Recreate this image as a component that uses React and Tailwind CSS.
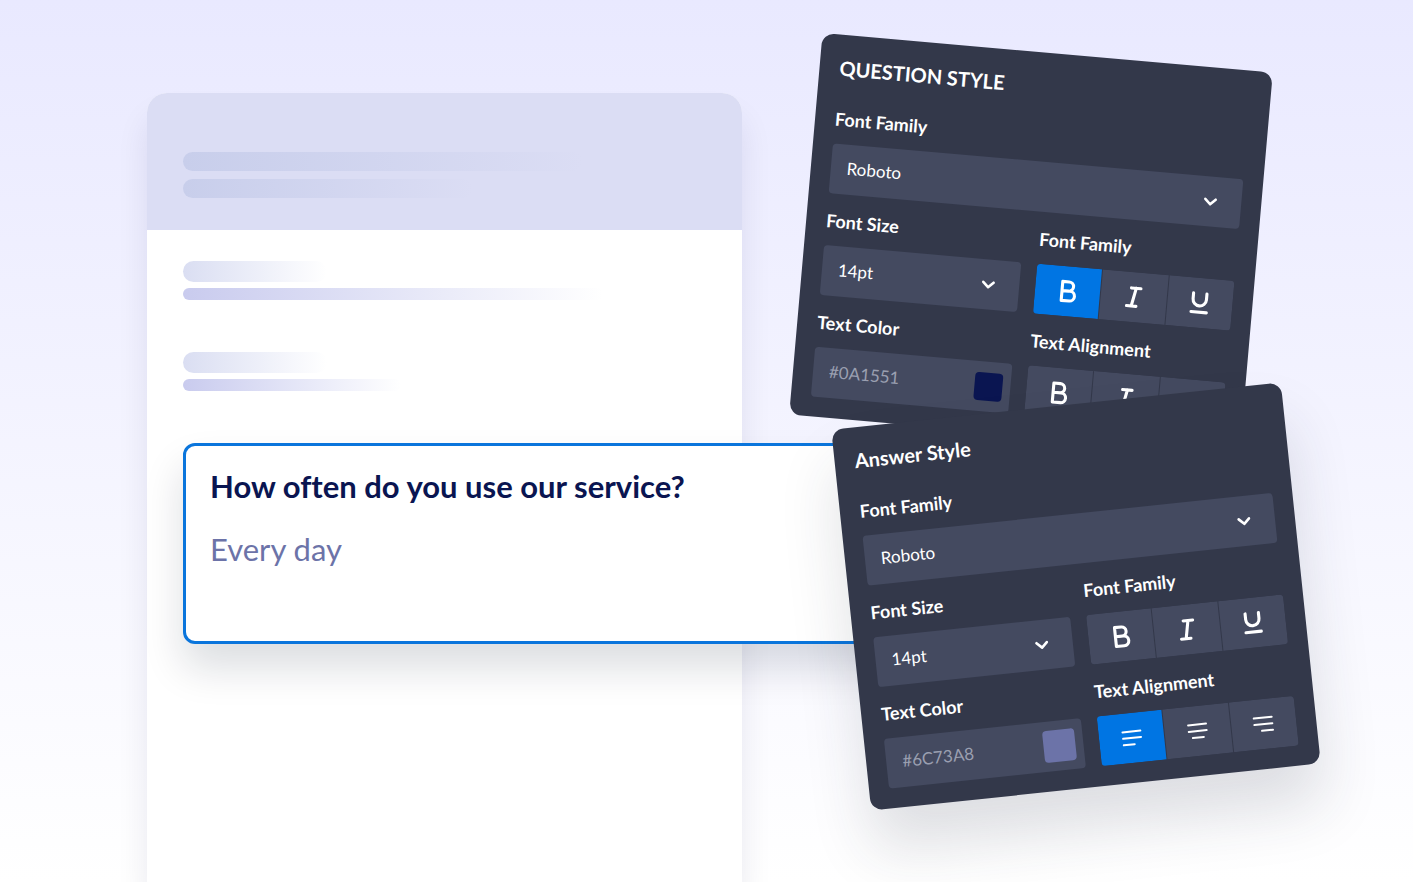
import React, { useId } from 'react'
import clsx from 'clsx'

function ChevronIcon() {
  return (
    <svg aria-hidden="true" viewBox="0 0 14 10" className="pointer-events-none absolute right-6 w-[14px] h-[10px]" fill="none" stroke="white" strokeWidth="2.6" strokeLinecap="round" strokeLinejoin="round">
      <path d="M1.8 2.8 7 7.8l5.2-5" />
    </svg>
  )
}

const ICON_PATHS = {
  bold: 'M6 2.5h6.6a4.6 4.6 0 0 1 0 9.2H6zM6 11.7h8a4.8 4.8 0 0 1 0 9.8H6z',
  italic: 'M9 3h9.5M5.5 21H15M13.8 3l-3.6 18',
  underline: 'M5.3 2.5v5.8a6.7 6.7 0 0 0 13.4 0V2.5M4.3 21.3h15.4',
  left: 'M3 5.5h18M3 12h18M3 18.5h11',
  center: 'M3 5.5h18M3 12h18M6.5 18.5h11',
  right: 'M3 5.5h18M3 12h18M10 18.5h11',
}

const THIN_ICONS = ['left', 'center', 'right']

function ToolIcon({ name }) {
  return (
    <svg aria-hidden="true" viewBox="0 0 24 24" className="w-6 h-6" fill="none" stroke="white" strokeWidth={THIN_ICONS.includes(name) ? 2 : 3.1} strokeLinecap="round" strokeLinejoin="round">
      <path d={ICON_PATHS[name]} />
    </svg>
  )
}

function SelectField({ label, value, className }) {
  const id = useId()
  return (
    <div className={className}>
      <label htmlFor={id} className="block pb-[15px] text-[18px] leading-5 font-bold">{label}</label>
      <div className="relative flex items-center">
        <select id={id} defaultValue={value} className="appearance-none w-full h-[50px] px-4 pb-0.5 rounded bg-[#444a60] text-[17px]">
          <option>{value}</option>
        </select>
        <ChevronIcon />
      </div>
    </div>
  )
}

function ColorField({ label, value, swatch }) {
  const id = useId()
  return (
    <div>
      <label htmlFor={id} className="block pb-[15px] text-[18px] leading-5 font-bold">{label}</label>
      <div className="flex items-center h-[50px] pl-4 pr-2 rounded bg-[#444a60]">
        <input id={id} type="text" defaultValue={value} className="min-w-0 flex-1 pb-0.5 bg-transparent text-[17px] text-[#9a9fb0]" />
        <button type="button" aria-label={`Pick color ${value}`} className={clsx('shrink-0 rounded', swatch)} />
      </div>
    </div>
  )
}

function ButtonGroup({ label, items, active }) {
  return (
    <fieldset>
      <legend className="block pb-[15px] text-[18px] leading-5 font-bold">{label}</legend>
      <div className="grid grid-cols-3 gap-px h-[50px] rounded overflow-hidden">
        {items.map(name => (
          <button
            key={name}
            type="button"
            aria-label={name}
            aria-pressed={name === active}
            className={clsx('flex items-center justify-center', name === active ? 'bg-[#0075e3]' : 'bg-[#444a60]')}
          >
            <ToolIcon name={name} />
          </button>
        ))}
      </div>
    </fieldset>
  )
}

function StylePanel({ title, color, swatch, activeStyle, alignItems, activeAlign, className }) {
  return (
    <section className={clsx('w-[452px] p-5 rounded-xl bg-[#33384a] text-white', className)}>
      <h2 className="pt-px pb-[29px] text-[20px] leading-6 font-bold">{title}</h2>
      <div className="grid grid-cols-2 gap-x-4 gap-y-[17px]">
        <SelectField label="Font Family" value="Roboto" className="col-span-2" />
        <SelectField label="Font Size" value="14pt" />
        <ButtonGroup label="Font Family" items={['bold', 'italic', 'underline']} active={activeStyle} />
        <ColorField label="Text Color" value={color} swatch={swatch} />
        <ButtonGroup label="Text Alignment" items={alignItems} active={activeAlign} />
      </div>
    </section>
  )
}

function FormPreview() {
  return (
    <div className="w-[595px] shrink-0 mt-[93px] flex flex-col rounded-t-[20px] bg-white shadow-[0_24px_32px_rgba(10,21,81,0.09)]">
      <div className="h-[137px] pt-[59px] px-9 flex flex-col gap-2 rounded-t-[20px] bg-[#dbddf4]">
        <div className="h-[19px] w-[400px] rounded-full bg-linear-to-r from-[#c8ceeb] to-[#dbddf4]" />
        <div className="h-[19px] w-[290px] rounded-full bg-linear-to-r from-[#c8ceeb] to-[#dbddf4]" />
      </div>
      <div className="pt-[31px] px-9 flex flex-col gap-[52px]">
        <div className="flex flex-col gap-1.5">
          <div className="h-[21px] w-[144px] rounded-full bg-linear-to-r from-[#dadef2] to-white" />
          <div className="h-3 w-[420px] rounded-full bg-linear-to-r from-[#c9cbee] to-white" />
        </div>
        <div className="flex flex-col gap-1.5">
          <div className="h-[21px] w-[144px] rounded-full bg-linear-to-r from-[#dadef2] to-white" />
          <div className="h-3 w-[218px] rounded-full bg-linear-to-r from-[#c9cbee] to-white" />
        </div>
        <div className="w-[740px] h-[201px] pt-[19px] px-6 rounded-xl border-[3px] border-[#0a75dc] bg-white shadow-[0_24px_40px_rgba(10,20,40,0.14)]">
          <h1 className="text-[31px] leading-[43px] font-bold text-[#0a1551] [font-variant-ligatures:none]">How often do you use our service?</h1>
          <p className="pt-5 text-[31px] leading-[43px] text-[#6c73a8]">Every day</p>
        </div>
      </div>
    </div>
  )
}

export default function App() {
  return (
    <main className="h-screen overflow-hidden flex pl-[147px] bg-linear-to-b from-[#e9e9ff] to-white font-['Lato',sans-serif]">
      <FormPreview />
      <div className="relative shrink-0 pt-[52px] pl-[63px]">
        <StylePanel
          title="QUESTION STYLE"
          color="#0A1551"
          swatch="w-7 h-7 bg-[#0a1551]"
          activeStyle="bold"
          alignItems={['bold', 'italic', 'underline']}
          className="rotate-5"
        />
        <StylePanel
          title="Answer Style"
          color="#6C73A8"
          swatch="w-8 h-8 bg-[#6c73a8]"
          alignItems={['left', 'center', 'right']}
          activeAlign="left"
          className="-rotate-6 -mt-[30px] ml-[45px] shadow-[0_40px_60px_rgba(40,45,60,0.15)]"
        />
      </div>
    </main>
  )
}
